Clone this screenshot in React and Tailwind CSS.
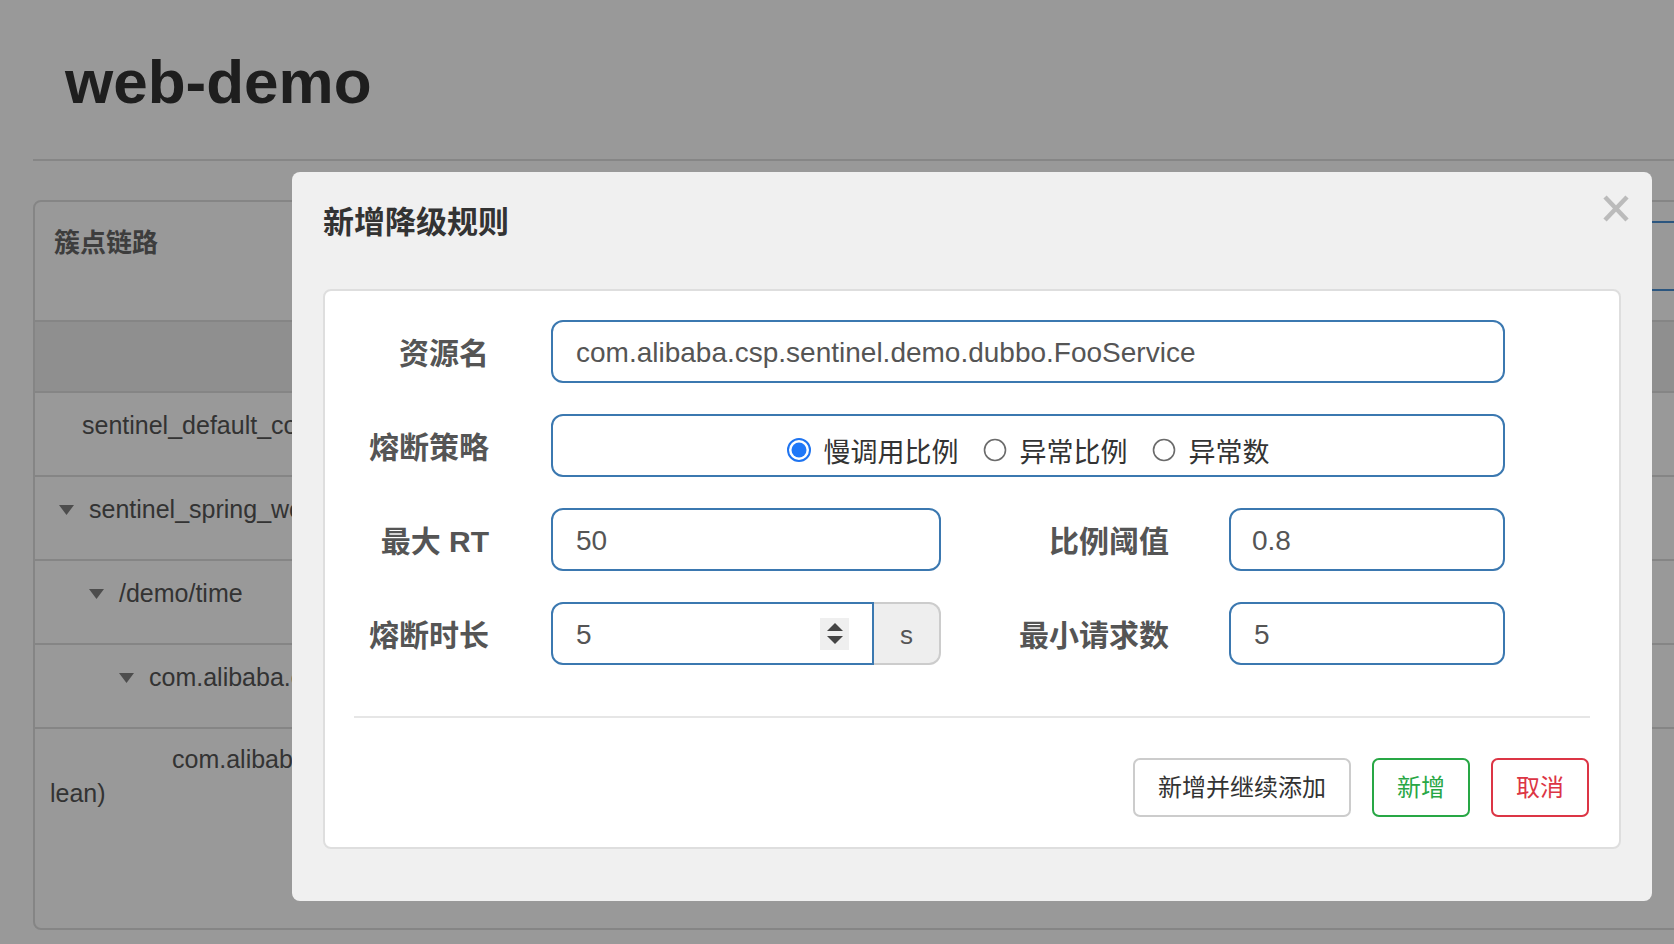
import React from 'react';

const Caret = () => (
  <svg width="15" height="10" viewBox="0 0 15 10" className="shrink-0">
    <polygon points="0,0 15,0 7.5,10" fill="#808080" />
  </svg>
);

const Radio = ({ checked }) =>
  checked ? (
    <svg width="24" height="24" viewBox="0 0 24 24" className="shrink-0 mb-[8px]">
      <circle cx="12" cy="12" r="11" fill="white" stroke="#1f74f0" strokeWidth="2" />
      <circle cx="12" cy="12" r="7.5" fill="#2078f8" />
    </svg>
  ) : (
    <svg width="24" height="24" viewBox="0 0 24 24" className="shrink-0 mb-[8px]">
      <circle cx="12" cy="12" r="10.5" fill="white" stroke="#6b6b6b" strokeWidth="1.6" />
    </svg>
  );

const treeRows = [
  { pad: 'pl-[47px]', caret: false, text: 'sentinel_default_context' },
  { pad: 'pl-[24px]', caret: true, text: 'sentinel_spring_web_context' },
  { pad: 'pl-[54px]', caret: true, text: '/demo/time' },
  { pad: 'pl-[84px]', caret: true, text: 'com.alibaba.csp.sentinel.demo.dubbo.FooService' },
];

const Label = ({ children, wide }) => (
  <div
    className={
      wide
        ? 'w-[228px] shrink-0 pt-[4px] text-right text-[30px] font-bold text-[#555] leading-[36px]'
        : 'w-[164px] shrink-0 pt-[4px] text-right text-[30px] font-bold text-[#555] leading-[36px]'
    }
  >
    {children}
  </div>
);

const App = () => {
  return (
    <div className="relative w-full h-[944px] overflow-hidden bg-white font-['Liberation_Sans','Noto_Sans_CJK_SC',sans-serif] text-[#333]">
      {/* page behind the dialog */}
      <h1 className="pt-[51px] pl-[65px] text-[62px] leading-none font-bold text-[#333]">web-demo</h1>
      <div className="mt-[46px] ml-[33px] h-[2px] bg-[#e0e0e0]" />

      <div className="mt-[39px] ml-[33px] w-[1700px] h-[730px] rounded-[8px] border-2 border-[#dedede] overflow-hidden">
        <div className="flex h-[120px] border-b-2 border-[#dedede]">
          <div className="pl-[19px] pt-[26px] text-[26px] leading-[30px] font-bold text-[#666]">簇点链路</div>
          <div className="ml-auto mr-[20px] mt-[19px] w-[420px] h-[70px] rounded-[6px] border-2 border-[#4a8fd4]" />
        </div>
        <div className="h-[71px] bg-[#eeeeee] border-b-2 border-[#dedede]" />
        {treeRows.map((r) => (
          <div
            key={r.text}
            className={'flex items-center gap-[15px] h-[84px] border-b-2 border-[#dedede] pb-[16px] whitespace-nowrap text-[25px] text-[#555] ' + r.pad}
          >
            {r.caret && <Caret />}
            <span>{r.text}</span>
          </div>
        ))}
        <div className="pl-[15px] pt-[13px] text-[25px] leading-[34px] text-[#555] indent-[122px] whitespace-nowrap">
          com.alibaba.csp.sentinel.demo.dubbo.FooService:sayHello(java.lang.String, boo
          <br />
          lean)
        </div>
      </div>

      {/* backdrop */}
      <div className="absolute inset-0 bg-black/40" />

      {/* dialog */}
      <div className="absolute left-[292px] top-[172px] w-[1360px] h-[729px] rounded-[8px] bg-[#f0f0f0] px-[31px] pt-[33px]">
        <button className="absolute right-[23px] top-[23px]">
          <svg width="26" height="27" viewBox="0 0 26 27">
            <line x1="2" y1="2" x2="24" y2="25" stroke="#bbbbbb" strokeWidth="4.5" />
            <line x1="24" y1="2" x2="2" y2="25" stroke="#bbbbbb" strokeWidth="4.5" />
          </svg>
        </button>
        <h4 className="text-[31px] leading-[36px] font-bold text-[#333]">新增降级规则</h4>

        <div className="mt-[48px] rounded-[8px] border-2 border-[#dedede] bg-white pt-[29px] pb-[30px]">
          <div className="flex flex-col gap-[31px]">
            <div className="flex items-center h-[63px]">
              <Label>资源名</Label>
              <div className="ml-[62px] w-[954px] h-full rounded-[12px] border-2 border-[#3b78b0] pl-[23px] pt-[3px] flex items-center text-[28px] text-[#555]">
                com.alibaba.csp.sentinel.demo.dubbo.FooService
              </div>
            </div>

            <div className="flex items-center h-[63px]">
              <Label>熔断策略</Label>
              <div className="ml-[62px] w-[954px] h-full rounded-[12px] border-2 border-[#3b78b0] pt-[16px] flex items-center justify-center gap-[24px] text-[27px] text-[#333]">
                <label className="flex items-center gap-[13px]">
                  <Radio checked />
                  <span>慢调用比例</span>
                </label>
                <label className="flex items-center gap-[13px]">
                  <Radio />
                  <span>异常比例</span>
                </label>
                <label className="flex items-center gap-[13px]">
                  <Radio />
                  <span>异常数</span>
                </label>
              </div>
            </div>

            <div className="flex items-center h-[63px]">
              <Label>最大 RT</Label>
              <div className="ml-[62px] w-[390px] h-full rounded-[12px] border-2 border-[#3b78b0] pl-[23px] pt-[3px] flex items-center text-[28px] text-[#555]">
                50
              </div>
              <Label wide>比例阈值</Label>
              <div className="ml-[60px] w-[276px] h-full rounded-[12px] border-2 border-[#3b78b0] pl-[21px] pt-[3px] flex items-center text-[28px] text-[#555]">
                0.8
              </div>
            </div>

            <div className="flex items-center h-[63px]">
              <Label>熔断时长</Label>
              <div className="ml-[62px] flex h-full w-[390px]">
                <div className="w-[323px] h-full rounded-l-[12px] border-2 border-[#3b78b0] pl-[23px] flex items-center text-[28px] text-[#555]">
                  <span className="flex-1 pt-[3px]">5</span>
                  <div className="mr-[23px] w-[29px] h-[32px] bg-[#efefef] flex flex-col items-center justify-center gap-[5px]">
                    <svg width="16" height="8" viewBox="0 0 16 8">
                      <polygon points="8,0 16,8 0,8" fill="#444" />
                    </svg>
                    <svg width="16" height="8" viewBox="0 0 16 8">
                      <polygon points="0,0 16,0 8,8" fill="#444" />
                    </svg>
                  </div>
                </div>
                <div className="flex-1 h-full rounded-r-[12px] border-2 border-l-0 border-[#cccccc] bg-[#eeeeee] pt-[3px] flex items-center justify-center text-[26px] text-[#555]">
                  s
                </div>
              </div>
              <Label wide>最小请求数</Label>
              <div className="ml-[60px] w-[276px] h-full rounded-[12px] border-2 border-[#3b78b0] pl-[23px] pt-[3px] flex items-center text-[28px] text-[#555]">
                5
              </div>
            </div>
          </div>

          <div className="mt-[51px] mx-[29px] h-[2px] bg-[#e6e6e6]" />

          <div className="mt-[40px] flex justify-end gap-[21px] pr-[30px]">
            <button className="h-[59px] px-[23px] rounded-[7px] border-2 border-[#cccccc] bg-white text-[24px] text-[#333]">
              新增并继续添加
            </button>
            <button className="h-[59px] px-[23px] rounded-[7px] border-2 border-[#28a745] bg-white text-[24px] text-[#28a745]">
              新增
            </button>
            <button className="h-[59px] px-[23px] rounded-[7px] border-2 border-[#dc3545] bg-white text-[24px] text-[#dc3545]">
              取消
            </button>
          </div>
        </div>
      </div>
    </div>
  );
};

export default App;
